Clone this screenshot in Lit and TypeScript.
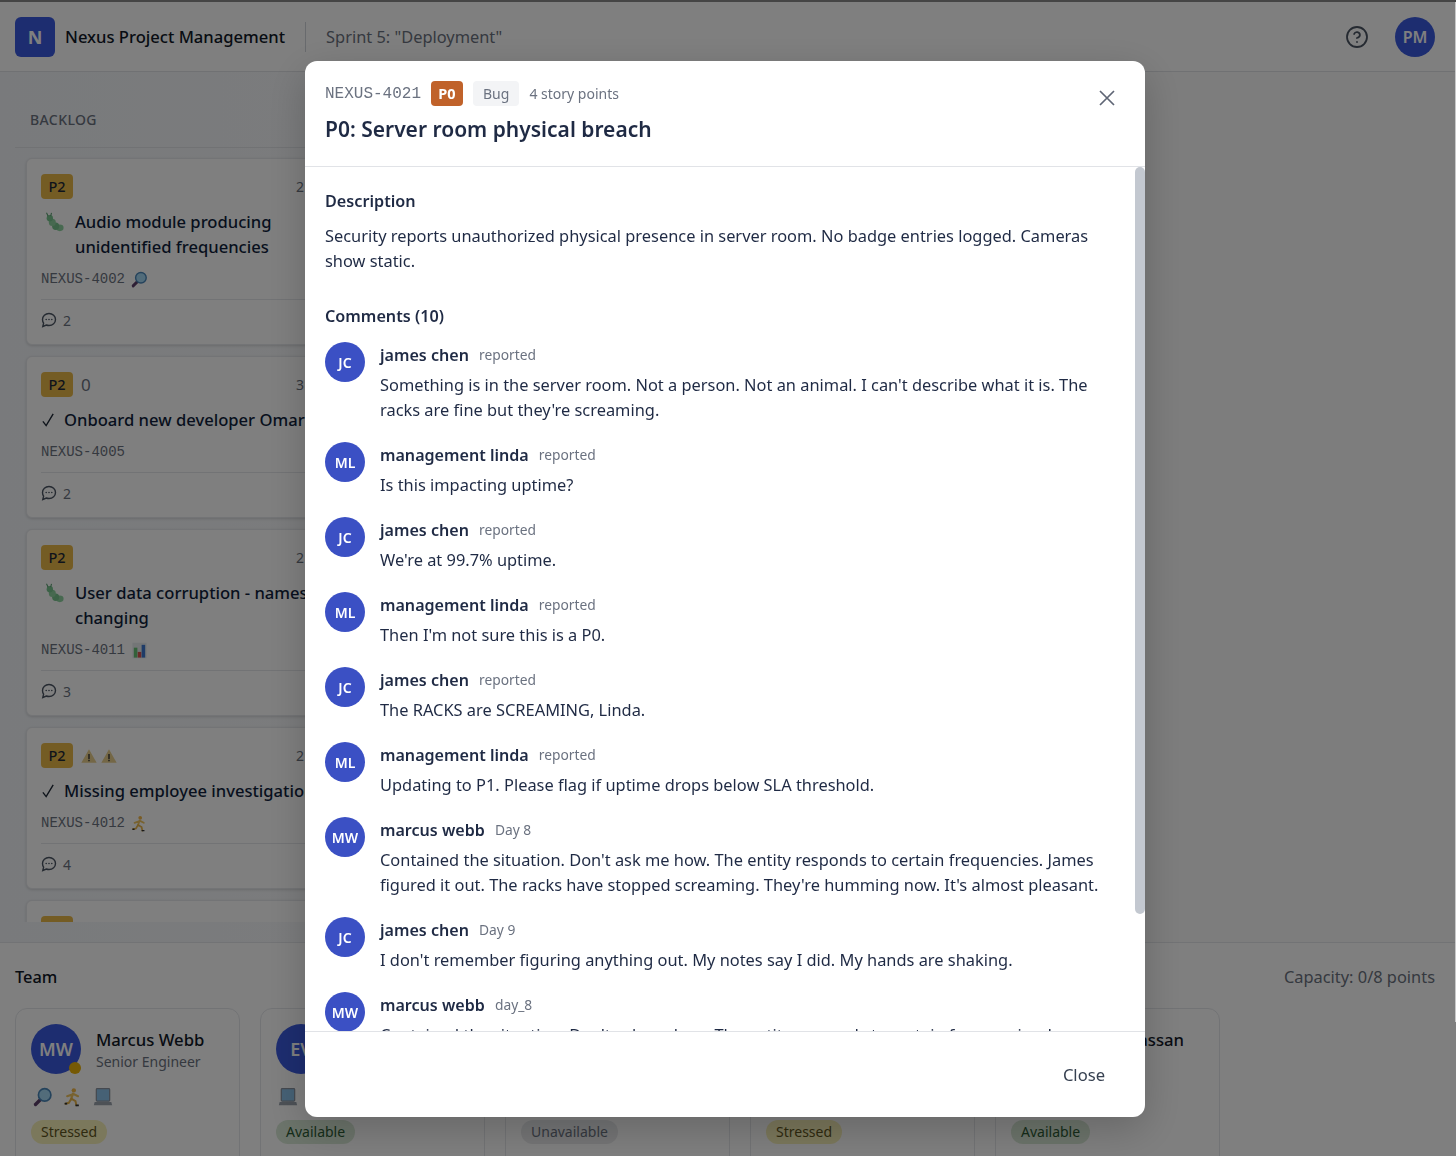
import { LitElement, css, html, nothing } from "lit";
import { customElement } from "lit/decorators.js";

const ICONS = {
  bug: html`<svg viewBox="0 0 24 24"><ellipse cx="19" cy="19" rx="4.500" ry="4" fill="#8fd3a0"/><ellipse cx="14" cy="17" rx="4.200" ry="4.500" fill="#78c48e"/><ellipse cx="10" cy="12.500" rx="4.200" ry="4.300" fill="#8fd3a0"/><ellipse cx="7" cy="7.500" rx="3.800" ry="3.800" fill="#78c48e"/><path d="M5 5 3 1M8 5l1-4" stroke="#5a9f70" stroke-width="1.300" fill="none"/></svg>`,
  search: html`<svg viewBox="0 0 24 24"><path d="M9 15 3 21" stroke="#5d3f6a" stroke-width="4" stroke-linecap="round"/><circle cx="14" cy="9.500" r="7.500" fill="#a5d8f5" stroke="#4a86b8" stroke-width="2"/></svg>`,
  runner: html`<svg viewBox="0 0 24 24"><circle cx="13" cy="4" r="2.600" fill="#f2b84b"/><path d="M12 8 10 14M12 8l6 3M11 9 5 11" stroke="#f0c560" stroke-width="2.600" fill="none" stroke-linecap="round"/><path d="M10 14l5 3 1 5M10 14l-3 5-4 1" stroke="#e8b54a" stroke-width="2.400" fill="none" stroke-linecap="round"/><path d="M15 22h4M2 20h3" stroke="#333" stroke-width="2"/></svg>`,
  laptop: html`<svg viewBox="0 0 24 24"><rect x="4" y="2" width="16" height="15" rx="1" fill="#8cc2ea" stroke="#8a93a0" stroke-width="1.500"/><path d="M2 18h20l1 4H1z" fill="#9aa2ad"/></svg>`,
  chart: html`<svg viewBox="0 0 24 24"><rect x="2" y="1" width="20" height="22" fill="#e8ecef"/><rect x="4" y="8" width="5" height="14" fill="#66c274"/><rect x="9.500" y="14" width="5" height="8" fill="#d9534f"/><rect x="15" y="4" width="5" height="18" fill="#3f78d0"/></svg>`,
  warning: html`<svg viewBox="0 0 24 24"><path d="M12 2 23.500 22H.5z" fill="#e8cf8c"/><path d="M12 9v8" stroke="#2a2a2a" stroke-width="2"/><path d="M12 18v2" stroke="#2a2a2a" stroke-width="2"/></svg>`,
  check: html`<svg viewBox="0 0 16 18"><path d="M2 10.500 5.500 15 13 2.500" fill="none" stroke="currentColor" stroke-width="1.500"/></svg>`,
};

const COMMENT_ICON = html`<svg class="bubble" viewBox="0 0 16 16"><path d="M8 1.500c3.700 0 6.500 2.600 6.500 6s-2.800 6-6.500 6c-1 0-1.900-.2-2.700-.5L1.800 14.500l.8-3.300C1.900 10.100 1.500 8.900 1.500 7.500c0-3.400 2.800-6 6.500-6z" fill="none" stroke="currentColor" stroke-width="1.400"/><circle cx="5.200" cy="7.500" r=".8" fill="currentColor"/><circle cx="8" cy="7.500" r=".8" fill="currentColor"/><circle cx="10.800" cy="7.500" r=".8" fill="currentColor"/></svg>`;

type IconName = keyof typeof ICONS;

const BACKLOG: {
  type: IconName;
  title: string;
  id: string;
  points: number;
  comments?: number;
  tools?: IconName[];
  warnings?: number;
  extra?: string;
}[] = [
  { type: "bug", title: "Audio module producing unidentified frequencies", id: "NEXUS-4002", points: 2, comments: 2, tools: ["search"] },
  { type: "check", title: "Onboard new developer Omar", id: "NEXUS-4005", points: 3, comments: 2, extra: "0" },
  { type: "bug", title: "User data corruption - names changing", id: "NEXUS-4011", points: 2, comments: 3, tools: ["chart"] },
  { type: "check", title: "Missing employee investigation", id: "NEXUS-4012", points: 2, comments: 4, tools: ["runner"], warnings: 2 },
  { type: "check", title: "", id: "", points: 2 },
];

const TEAM: { initials: string; name: string; role: string; tools: IconName[]; status: string; dot?: boolean }[] = [
  { initials: "MW", name: "Marcus Webb", role: "Senior Engineer", tools: ["search", "runner", "laptop"], status: "Stressed", dot: true },
  { initials: "EV", name: "", role: "", tools: ["laptop"], status: "Available" },
  { initials: "", name: "", role: "", tools: [], status: "Unavailable" },
  { initials: "", name: "", role: "", tools: [], status: "Stressed" },
  { initials: "OH", name: "Omar Hassan", role: "", tools: [], status: "Available" },
];

const CONTAINED =
  "Contained the situation. Don't ask me how. The entity responds to certain frequencies. James figured it out. The racks have stopped screaming. They're humming now. It's almost pleasant.";
const NO_MEMORY = "I don't remember figuring anything out. My notes say I did. My hands are shaking.";

const COMMENTS = [
  { initials: "JC", author: "james chen", when: "reported", text: "Something is in the server room. Not a person. Not an animal. I can't describe what it is. The racks are fine but they're screaming." },
  { initials: "ML", author: "management linda", when: "reported", text: "Is this impacting uptime?" },
  { initials: "JC", author: "james chen", when: "reported", text: "We're at 99.7% uptime." },
  { initials: "ML", author: "management linda", when: "reported", text: "Then I'm not sure this is a P0." },
  { initials: "JC", author: "james chen", when: "reported", text: "The RACKS are SCREAMING, Linda." },
  { initials: "ML", author: "management linda", when: "reported", text: "Updating to P1. Please flag if uptime drops below SLA threshold." },
  { initials: "MW", author: "marcus webb", when: "Day 8", text: CONTAINED },
  { initials: "JC", author: "james chen", when: "Day 9", text: NO_MEMORY },
  { initials: "MW", author: "marcus webb", when: "day_8", text: CONTAINED },
  { initials: "JC", author: "james chen", when: "day_9", text: NO_MEMORY },
];

@customElement("app-root")
export class AppRoot extends LitElement {
  static styles = css`
    * {
      box-sizing: border-box;
      margin: 0;
      padding: 0;
    }

    :host {
      display: block;
      height: 1156px;
      overflow: hidden;
      font-family: "Noto Sans", "Open Sans", sans-serif;
      color: #1f2937;
      background: #fff;
    }

    .app {
      display: flex;
      flex-direction: column;
      height: 1156px;
      border-top: 2px solid #8a8a8a;
      background: #f8f9fb;
    }

    .header {
      flex: none;
      display: flex;
      align-items: center;
      height: 70px;
      padding: 0 21px 0 15px;
      background: #fff;
      border-bottom: 1px solid #e0e2e6;
    }

    .logo {
      display: flex;
      align-items: center;
      justify-content: center;
      width: 40px;
      height: 40px;
      border-radius: 6px;
      background: #3b5be0;
      color: #fff;
      font-size: 18px;
      font-weight: 700;
    }

    .app-name {
      margin-left: 10px;
      font-size: 16.6px;
      font-weight: 500;
      color: #111827;
    }

    .sprint {
      margin-left: 20px;
      padding-left: 20px;
      border-left: 1px solid #d1d5db;
      font-size: 16.4px;
      line-height: 30px;
      color: #6b7280;
    }

    .help {
      width: 24px;
      height: 24px;
      margin-left: auto;
      margin-right: 26px;
      color: #4b5563;
    }

    .me {
      display: flex;
      align-items: center;
      justify-content: center;
      width: 40px;
      height: 40px;
      border-radius: 50%;
      background: #3b5be0;
      color: #fff;
      font-size: 16px;
      font-weight: 600;
    }

    .board {
      flex: 1;
      min-height: 0;
      padding: 20px 15px;
      background: linear-gradient(90deg, #f2f5f9, #fbfbfb 45%);
    }

    .column {
      width: 339px;
      height: 100%;
      display: flex;
      flex-direction: column;
      overflow: hidden;
    }

    .column-title {
      flex: none;
      height: 56px;
      padding: 0 15px;
      display: flex;
      align-items: center;
      border-bottom: 1px solid #e2e5e9;
      font-size: 14px;
      font-weight: 500;
      letter-spacing: 0.4px;
      color: #6b7280;
    }

    .cards {
      flex: 1;
      min-height: 0;
      overflow: hidden;
      padding: 10px 11px;
      display: flex;
      flex-direction: column;
      gap: 11px;
    }

    .card {
      flex: none;
      padding: 15px 14px 14px;
      background: #fff;
      border: 1px solid #e6e8ec;
      border-radius: 6px;
      box-shadow: 0 1px 3px rgba(0, 0, 0, 0.14);
    }

    .card-top {
      display: flex;
      align-items: center;
      height: 25px;
      gap: 8px;
      font-size: 17px;
      color: #6b7280;
    }

    .prio {
      display: flex;
      align-items: center;
      justify-content: center;
      width: 32px;
      height: 25px;
      padding-bottom: 1px;
      border-radius: 4px;
      background: #e9b949;
      color: #1f2937;
      font-size: 14.5px;
      font-weight: 500;
    }

    .warn {
      display: flex;
      width: 16px;
      height: 16px;
    }

    .warn + .warn {
      margin-left: -4px;
    }

    .points {
      margin-left: auto;
      font-size: 14px;
    }

    .card-title {
      display: flex;
      gap: 8px;
      margin-top: 10px;
      font-size: 16.6px;
      line-height: 25px;
      font-weight: 500;
      color: #111f3d;
    }

    .card-title .type {
      flex: none;
      width: 15px;
      height: 25px;
      display: flex;
      align-items: center;
      color: #1f2937;
    }

    .card-title .type.bug {
      width: 26px;
      padding: 0 2px;
    }

    .card-title svg {
      width: 100%;
      height: 20px;
    }

    .card-id {
      display: flex;
      align-items: center;
      gap: 6px;
      height: 20px;
      margin-top: 10px;
      font-family: "Liberation Mono", "DejaVu Sans Mono", monospace;
      font-size: 14px;
      color: #6b7280;
    }

    .card-id svg {
      width: 17px;
      height: 17px;
    }

    .card-foot {
      display: flex;
      align-items: center;
      gap: 6px;
      height: 31px;
      margin-top: 10px;
      padding-top: 10px;
      border-top: 1px solid #e5e7eb;
      font-size: 14px;
      color: #6b7280;
    }

    .bubble {
      width: 16px;
      height: 16px;
      color: #4b5563;
    }

    .team {
      flex: none;
      height: 214px;
      padding: 20px 21px 0 15px;
      background: #fff;
      border-top: 1px solid #e5e7eb;
      overflow: hidden;
    }

    .team-head {
      display: flex;
      align-items: center;
      justify-content: space-between;
      height: 26px;
      margin-bottom: 19px;
      font-size: 16.4px;
    }

    .team-head strong {
      font-weight: 500;
      color: #111827;
    }

    .team-head span {
      color: #6b7280;
    }

    .members {
      display: flex;
      gap: 20px;
    }

    .member {
      flex: none;
      width: 225px;
      height: 190px;
      padding: 15px;
      border: 1px solid #e5e7eb;
      border-radius: 12px;
    }

    .member-top {
      display: flex;
      align-items: center;
      gap: 15px;
    }

    .member-avatar {
      position: relative;
      flex: none;
      display: flex;
      align-items: center;
      justify-content: center;
      width: 50px;
      height: 50px;
      border-radius: 50%;
      background: #3b5be0;
      color: #fff;
      font-size: 18px;
      font-weight: 600;
    }

    .dot {
      position: absolute;
      right: 0;
      bottom: 0;
      width: 12px;
      height: 12px;
      border-radius: 50%;
      background: #eab308;
    }

    .member-info {
      padding-top: 2px;
    }

    .member-name {
      font-size: 16.7px;
      font-weight: 500;
      line-height: 24px;
      min-height: 24px;
      white-space: nowrap;
      color: #111827;
    }

    .member-role {
      font-size: 14px;
      line-height: 20px;
      min-height: 20px;
      color: #6b7280;
    }

    .tools {
      display: flex;
      gap: 10px;
      height: 20px;
      margin-top: 13px;
      margin-left: 2px;
    }

    .tools svg {
      width: 20px;
      height: 20px;
    }

    .status {
      display: inline-block;
      margin-top: 13px;
      padding: 0 10px;
      border-radius: 12px;
      font-size: 14px;
      line-height: 24px;
    }

    .status.Stressed {
      background: #f7f0b8;
      color: #5f5520;
    }

    .status.Available {
      background: #d8e8d6;
      color: #2c5a34;
    }

    .status.Unavailable {
      background: #e9eaec;
      color: #6b7280;
    }

    .overlay {
      position: fixed;
      inset: 0;
      display: flex;
      justify-content: center;
      padding: 61px 6px 0 0;
      background: rgba(0, 0, 0, 0.5);
    }

    .edge {
      position: fixed;
      top: 2px;
      right: 0;
      width: 1px;
      height: 1020px;
      background: #c8c8c8;
    }

    .modal {
      position: relative;
      display: flex;
      flex-direction: column;
      width: 840px;
      height: 1056px;
      overflow: hidden;
      border-radius: 12px;
      background: #fff;
      box-shadow: 0 12px 40px rgba(0, 0, 0, 0.2);
    }

    .modal-head {
      flex: none;
      position: relative;
      height: 106px;
      padding: 20px 20px 0;
      border-bottom: 1px solid #e1e3e7;
    }

    .modal-meta {
      display: flex;
      align-items: center;
      height: 25px;
      gap: 10px;
      font-size: 14px;
      color: #6b7280;
    }

    .modal-id {
      font-family: "Liberation Mono", "DejaVu Sans Mono", monospace;
      font-size: 16px;
    }

    .p0 {
      display: flex;
      align-items: center;
      justify-content: center;
      width: 32px;
      height: 25px;
      padding-bottom: 2px;
      border-radius: 4px;
      background: #c0622a;
      color: #fff;
      font-size: 14.5px;
      font-weight: 700;
    }

    .kind {
      display: flex;
      align-items: center;
      height: 25px;
      padding: 0 10px;
      border-radius: 4px;
      background: #f3f4f6;
    }

    .modal-title {
      margin-top: 8px;
      font-size: 21px;
      font-weight: 600;
      line-height: 30px;
      color: #1f2a44;
    }

    .x {
      position: absolute;
      top: 29px;
      right: 30px;
      width: 16px;
      height: 16px;
      color: #5f6675;
    }

    .modal-body {
      flex: 1;
      min-height: 0;
      overflow: hidden;
      padding: 21px 25px 0 20px;
      font-size: 16.4px;
      line-height: 25px;
      color: #1f2a44;
    }

    .thumb {
      position: absolute;
      top: 106px;
      right: 0;
      width: 10px;
      height: 747px;
      border-radius: 5px;
      background: #c3c8d0;
    }

    .section-title {
      margin-bottom: 10px;
      padding-top: 1px;
      font-weight: 600;
      font-size: 16.2px;
    }

    .section-title.comments {
      margin-bottom: 13px;
    }

    .description {
      margin-top: -1px;
      margin-bottom: 30px;
    }

    .comment {
      display: flex;
      gap: 15px;
      margin-bottom: 20px;
    }

    .comment-avatar {
      flex: none;
      display: flex;
      align-items: center;
      justify-content: center;
      width: 40px;
      height: 40px;
      border-radius: 50%;
      background: #3b50c4;
      color: #fff;
      font-size: 14px;
      font-weight: 600;
    }

    .comment-head {
      display: flex;
      align-items: center;
      gap: 10px;
      height: 25px;
      margin-bottom: 5px;
    }

    .comment-head strong {
      padding-top: 1px;
      font-size: 16.1px;
      font-weight: 600;
    }

    .comment-head span {
      font-size: 13.8px;
      color: #6b7280;
    }

    .modal-foot {
      flex: none;
      display: flex;
      justify-content: flex-end;
      align-items: center;
      height: 86px;
      padding-right: 40px;
      border-top: 1px solid #e1e3e7;
      font-size: 16.6px;
      color: #374151;
    }
  `;

  private renderCard(card: (typeof BACKLOG)[number]) {
    return html`
      <div class="card">
        <div class="card-top">
          <span class="prio">P2</span>
          ${card.extra ?? nothing}
          ${Array.from({ length: card.warnings ?? 0 }, () => html`<span class="warn">${ICONS.warning}</span>`)}
          <span class="points">${card.points} pts</span>
        </div>
        ${card.title
          ? html`
              <div class="card-title">
                <span class="type ${card.type}">${ICONS[card.type]}</span>
                <span>${card.title}</span>
              </div>
              <div class="card-id">${card.id} ${(card.tools ?? []).map((t) => ICONS[t])}</div>
              <div class="card-foot">${COMMENT_ICON} ${card.comments}</div>
            `
          : nothing}
      </div>
    `;
  }

  private renderMember(member: (typeof TEAM)[number]) {
    return html`
      <div class="member">
        <div class="member-top">
          <div class="member-avatar">
            ${member.initials}
            ${member.dot ? html`<span class="dot"></span>` : nothing}
          </div>
          <div class="member-info">
            <div class="member-name">${member.name}</div>
            <div class="member-role">${member.role}</div>
          </div>
        </div>
        <div class="tools">${member.tools.map((t) => ICONS[t])}</div>
        <span class="status ${member.status}">${member.status}</span>
      </div>
    `;
  }

  protected render() {
    return html`
      <div class="app">
        <header class="header">
          <div class="logo">N</div>
          <div class="app-name">Nexus Project Management</div>
          <div class="sprint">Sprint 5: "Deployment"</div>
          <svg class="help" viewBox="0 0 24 24" fill="none" stroke="currentColor" stroke-width="1.800" stroke-linecap="round">
            <circle cx="12" cy="12" r="10"></circle>
            <path d="M9.100 9a3 3 0 0 1 5.800 1c0 2-3 3-3 3"></path>
            <path d="M12 17h.01"></path>
          </svg>
          <div class="me">PM</div>
        </header>

        <main class="board">
          <section class="column">
            <div class="column-title">BACKLOG</div>
            <div class="cards">${BACKLOG.map((c) => this.renderCard(c))}</div>
          </section>
        </main>

        <section class="team">
          <div class="team-head">
            <strong>Team</strong>
            <span>Capacity: 0/8 points</span>
          </div>
          <div class="members">${TEAM.map((m) => this.renderMember(m))}</div>
        </section>
      </div>

      <div class="overlay">
        <div class="modal">
          <div class="modal-head">
            <div class="modal-meta">
              <span class="modal-id">NEXUS-4021</span>
              <span class="p0">P0</span>
              <span class="kind">Bug</span>
              <span>4 story points</span>
            </div>
            <h2 class="modal-title">P0: Server room physical breach</h2>
            <svg class="x" viewBox="0 0 16 16" fill="none" stroke="currentColor" stroke-width="1.700">
              <path d="M1 1l14 14M15 1 1 15"></path>
            </svg>
          </div>

          <div class="modal-body">
            <div class="section-title">Description</div>
            <p class="description">
              Security reports unauthorized physical presence in server room. No badge entries logged. Cameras show static.
            </p>
            <div class="section-title comments">Comments (10)</div>
            ${COMMENTS.map(
              (c) => html`
                <div class="comment">
                  <div class="comment-avatar">${c.initials}</div>
                  <div>
                    <div class="comment-head">
                      <strong>${c.author}</strong>
                      <span>${c.when}</span>
                    </div>
                    <p>${c.text}</p>
                  </div>
                </div>
              `
            )}
          </div>

          <div class="thumb"></div>
          <div class="modal-foot">Close</div>
        </div>
      </div>
      <div class="edge"></div>
    `;
  }
}
